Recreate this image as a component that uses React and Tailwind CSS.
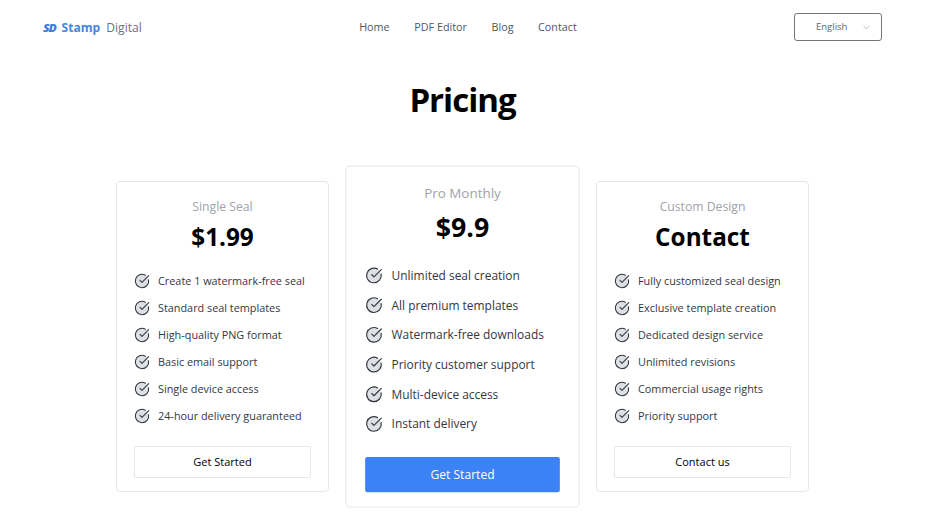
import { CircleCheckBig, ChevronDown } from "lucide-react";

const links = ["Home", "PDF Editor", "Blog", "Contact"];

const plans = [
  {
    name: "Single Seal",
    price: "$1.99",
    cta: "Get Started",
    features: [
      "Create 1 watermark-free seal",
      "Standard seal templates",
      "High-quality PNG format",
      "Basic email support",
      "Single device access",
      "24-hour delivery guaranteed",
    ],
  },
  {
    name: "Pro Monthly",
    price: "$9.9",
    cta: "Get Started",
    featured: true,
    features: [
      "Unlimited seal creation",
      "All premium templates",
      "Watermark-free downloads",
      "Priority customer support",
      "Multi-device access",
      "Instant delivery",
    ],
  },
  {
    name: "Custom Design",
    price: "Contact",
    cta: "Contact us",
    features: [
      "Fully customized seal design",
      "Exclusive template creation",
      "Dedicated design service",
      "Unlimited revisions",
      "Commercial usage rights",
      "Priority support",
    ],
  },
];

function Navbar() {
  return (
    <header className="flex h-[54px] items-center justify-between px-[42.5px]">
      <div className="flex w-[189px] items-center pt-[2px] text-[12.1px]">
        <span className="mr-[8px] w-[11px] origin-left scale-x-110 text-[11px] font-extrabold italic tracking-[-1px] text-[#3b7ddd]">SD</span>
        <span className="font-bold text-[#4287dc]">Stamp</span>
        <span className="ml-[6px] text-[#6b7280]">Digital</span>
      </div>
      <nav className="flex gap-[24.5px] text-[10.8px] text-[#52565e]">
        {links.map((l) => (
          <a key={l} href="#">{l}</a>
        ))}
      </nav>
      <div className="flex w-[178px] justify-end">
        <button className="flex h-7 w-[88px] items-center justify-between rounded-[3px] border border-[#777] pl-[20.5px] pr-[9px] text-[9.5px] text-[#666]">
          English
          <ChevronDown size={11} strokeWidth={1.5} className="text-gray-400" />
        </button>
      </div>
    </header>
  );
}

function PlanCard({ plan }) {
  return (
    <div
      className={`flex h-[311px] w-[213px] flex-col rounded-[4px] border border-gray-200 bg-white px-[17px] pt-[15px] ${plan.featured ? "scale-110" : ""}`}
    >
      <h2 className="mt-px text-center text-[12.2px] leading-[18px] text-[#a0a2ab]">{plan.name}</h2>
      <p className="mt-[6px] text-center text-[24.3px] font-bold leading-[30px] text-black">{plan.price}</p>
      <ul className="mt-[15px]">
        {plan.features.map((f) => (
          <li key={f} className="flex h-[27px] items-center gap-[8px] text-[10.85px] text-[#33373f]">
            <CircleCheckBig size={16} strokeWidth={1.6} className="fill-[#dde1e6] text-[#33373f]" />
            <span className="pt-px">{f}</span>
          </li>
        ))}
      </ul>
      <button
        className={`mt-[17px] h-8 rounded-[2px] text-[11px] ${plan.featured ? "bg-[#3b82f6] text-white" : "border border-gray-200 text-black"}`}
      >
        {plan.cta}
      </button>
    </div>
  );
}

export default function App() {
  return (
    <div className="h-[520px] overflow-hidden bg-white font-['Open_Sans','Noto_Sans',sans-serif]">
      <Navbar />
      <main>
        <h1 className="mt-6 text-center text-[33px] font-bold leading-[44px] tracking-[-0.03em] text-black">Pricing</h1>
        <section className="mt-[59px] flex justify-center gap-[27px]">
          {plans.map((p) => (
            <PlanCard key={p.name} plan={p} />
          ))}
        </section>
      </main>
    </div>
  );
}
